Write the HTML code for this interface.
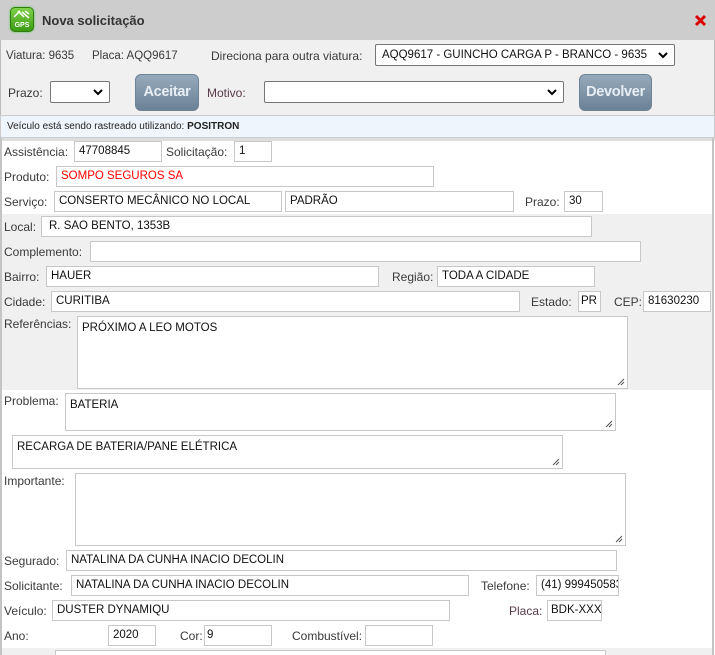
<!DOCTYPE html>
<html style="overflow:hidden;width:715px;height:655px"><head><meta charset="utf-8"><style>
*{box-sizing:border-box;margin:0;padding:0}
body{width:715px;height:655px;overflow:hidden;background:#fff;font-family:"Liberation Sans",Arial,sans-serif;font-size:12px;color:#333;position:relative}
.a{position:absolute}
.l{position:absolute;white-space:nowrap;line-height:14px;transform:translateY(-7px);color:#3a3a3a}
.i{position:absolute;border:1px solid #c8c8c8;background:#fff;height:21px;line-height:19px;padding-left:4px;white-space:nowrap;overflow:hidden;color:#111;font-size:11.5px}
.t{position:absolute;border:1px solid #c8c8c8;background:#fff;padding:5px 4px;color:#111;font-size:11.5px;white-space:nowrap;overflow:hidden}
.g{position:absolute;right:2px;bottom:2px;width:8px;height:8px}
.sel{position:absolute;border:1px solid #767676;border-radius:2px;background:#fff;height:22px;line-height:20px;padding-left:6px;white-space:nowrap;overflow:hidden;font-size:12px;color:#111}
.sel span{display:block;overflow:hidden;width:268px}
.sel svg{position:absolute;right:6px;top:7px}
.btn{position:absolute;border-radius:6px;background:linear-gradient(#97aabb,#6b8196);border:1px solid #6f8397;color:#e8eef3;font-weight:bold;font-size:14.5px;text-align:center;line-height:34px;font-family:"Liberation Sans",Arial,sans-serif;letter-spacing:-0.3px}
</style></head><body>
<div class="a" style="left:0;top:0;width:715px;height:40px;background:#cdcdcd"></div>
<div class="a" style="left:10px;top:7px;width:24px;height:25px;border-radius:5px;background:linear-gradient(#7fd24a,#3a9a12);border:1px solid #2f7d0c;box-shadow:0 0 2px #5c5"></div>
<svg class="a" style="left:12px;top:9px" width="20" height="20" viewBox="0 0 20 20"><path d="M2 8 L8 2 M6 2 L12 8 M10 3 L17 9 M13 2 L17 5" stroke="#fff" stroke-width="1.5" fill="none"/><text x="10" y="18" font-size="7" font-weight="bold" fill="#fff" text-anchor="middle" font-family="Liberation Sans">GPS</text></svg>
<div class="l" style="left:42px;top:21px;font-weight:bold;font-size:13px;color:#333">Nova solicitação</div>
<svg class="a" style="left:694px;top:14px" width="13" height="13" viewBox="0 0 13 13"><path d="M2 2 L11 11 M11 2 L2 11" stroke="#d90000" stroke-width="3"/></svg>
<div class="a" style="left:0;top:40px;width:715px;height:75px;background:#f0f0f0;border-left:1px solid #bbb;border-right:1px solid #bbb"></div>
<div class="l" style="left:6px;top:56px;font-size:11.5px">Viatura: 9635</div>
<div class="l" style="left:92px;top:56px;font-size:11.5px">Placa: AQQ9617</div>
<div class="l" style="left:211px;top:56px">Direciona para outra viatura:</div>
<div class="sel" style="left:375px;top:44px;width:300px;font-size:11.5px"><span>AQQ9617 - GUINCHO CARGA P - BRANCO - 9635 - MOT</span><svg width="10" height="7"><path d="M1 1 L5 5 L9 1" stroke="#000" stroke-width="2" fill="none"/></svg></div>
<div class="l" style="left:8px;top:93px">Prazo:</div>
<div class="sel" style="left:50px;top:81px;width:60px"><svg width="10" height="7"><path d="M1 1 L5 5 L9 1" stroke="#000" stroke-width="2" fill="none"/></svg></div>
<div class="btn" style="left:135px;top:74px;width:64px;height:37px">Aceitar</div>
<div class="l" style="left:207px;top:93px;color:#5a3a4a">Motivo:</div>
<div class="sel" style="left:264px;top:81px;width:300px"><svg width="10" height="7"><path d="M1 1 L5 5 L9 1" stroke="#000" stroke-width="2" fill="none"/></svg></div>
<div class="btn" style="left:579px;top:74px;width:73px;height:37px">Devolver</div>
<div class="a" style="left:0;top:115px;width:715px;height:23px;background:#eef5fc;border:1px solid #ccc"></div>
<div class="l" style="left:7px;top:127px;font-size:10px;color:#222">Veículo está sendo rastreado utilizando: <b>POSITRON</b></div>
<div class="a" style="left:0;top:138px;width:715px;height:3px;background:#ddd"></div>
<div class="a" style="left:0;top:138px;width:2px;height:517px;background:#c4c4c4"></div>
<div class="a" style="left:712px;top:138px;width:2px;height:517px;background:#c4c4c4"></div>
<div class="a" style="left:2px;top:214px;width:710px;height:176px;background:#f0f0f0"></div>
<div class="a" style="left:2px;top:648px;width:710px;height:7px;background:#f0f0f0"></div>

<div class="l" style="left:4px;top:152px">Assistência:</div>
<div class="i" style="left:74px;top:141px;width:88px">47708845</div>
<div class="l" style="left:166px;top:152px">Solicitação:</div>
<div class="i" style="left:234px;top:141px;width:38px">1</div>
<div class="l" style="left:4px;top:177px">Produto:</div>
<div class="i" style="left:56px;top:166px;width:378px;color:#f00">SOMPO SEGUROS SA</div>
<div class="l" style="left:4px;top:202px">Serviço:</div>
<div class="i" style="left:54px;top:191px;width:228px">CONSERTO MECÂNICO NO LOCAL</div>
<div class="i" style="left:285px;top:191px;width:229px">PADRÃO</div>
<div class="l" style="left:525px;top:202px">Prazo:</div>
<div class="i" style="left:564px;top:191px;width:39px">30</div>

<div class="l" style="left:4px;top:227px">Local:</div>
<div class="i" style="left:41px;top:216px;width:551px;padding-left:7px">R. SAO BENTO, 1353B</div>
<div class="l" style="left:4px;top:252px">Complemento:</div>
<div class="i" style="left:90px;top:241px;width:551px"></div>
<div class="l" style="left:4px;top:277px">Bairro:</div>
<div class="i" style="left:46px;top:266px;width:333px">HAUER</div>
<div class="l" style="left:392px;top:277px">Região:</div>
<div class="i" style="left:437px;top:266px;width:158px">TODA A CIDADE</div>
<div class="l" style="left:4px;top:302px">Cidade:</div>
<div class="i" style="left:51px;top:291px;width:469px">CURITIBA</div>
<div class="l" style="left:531px;top:302px">Estado:</div>
<div class="i" style="left:578px;top:291px;width:23px;padding-left:2px">PR</div>
<div class="l" style="left:614px;top:302px">CEP:</div>
<div class="i" style="left:643px;top:291px;width:68px">81630230</div>
<div class="l" style="left:4px;top:324px">Referências:</div>
<div class="t" style="left:77px;top:316px;width:551px;height:73px">PRÓXIMO A LEO MOTOS<svg class="g" viewBox="0 0 8 8"><path d="M7 1 L1 7 M7 4 L4 7" stroke="#555" stroke-width="1"/></svg></div>

<div class="l" style="left:4px;top:401px">Problema:</div>
<div class="t" style="left:65px;top:393px;width:551px;height:38px">BATERIA<svg class="g" viewBox="0 0 8 8"><path d="M7 1 L1 7 M7 4 L4 7" stroke="#555" stroke-width="1"/></svg></div>
<div class="t" style="left:12px;top:435px;width:551px;height:34px">RECARGA DE BATERIA/PANE ELÉTRICA<svg class="g" viewBox="0 0 8 8"><path d="M7 1 L1 7 M7 4 L4 7" stroke="#555" stroke-width="1"/></svg></div>
<div class="l" style="left:4px;top:481px">Importante:</div>
<div class="t" style="left:75px;top:473px;width:551px;height:73px"><svg class="g" viewBox="0 0 8 8"><path d="M7 1 L1 7 M7 4 L4 7" stroke="#555" stroke-width="1"/></svg></div>
<div class="l" style="left:4px;top:561px">Segurado:</div>
<div class="i" style="left:66px;top:550px;width:551px">NATALINA DA CUNHA INACIO DECOLIN</div>
<div class="l" style="left:4px;top:586px">Solicitante:</div>
<div class="i" style="left:71px;top:575px;width:398px">NATALINA DA CUNHA INACIO DECOLIN</div>
<div class="l" style="left:481px;top:586px">Telefone:</div>
<div class="i" style="left:536px;top:575px;width:83px">(41) 999450583</div>
<div class="l" style="left:4px;top:611px">Veículo:</div>
<div class="i" style="left:52px;top:600px;width:398px">DUSTER DYNAMIQU</div>
<div class="l" style="left:509px;top:611px;color:#5a3a4a">Placa:</div>
<div class="i" style="left:547px;top:600px;width:55px;padding-left:3px">BDK-XXXX</div>
<div class="l" style="left:4px;top:636px">Ano:</div>
<div class="i" style="left:108px;top:625px;width:48px">2020</div>
<div class="l" style="left:180px;top:636px">Cor:</div>
<div class="i" style="left:204px;top:625px;width:68px;padding-left:2px">9</div>
<div class="l" style="left:292px;top:636px">Combustível:</div>
<div class="i" style="left:365px;top:625px;width:68px"></div>
<div class="i" style="left:55px;top:650px;width:551px;height:5px;border-bottom:none"></div>
</body></html>
